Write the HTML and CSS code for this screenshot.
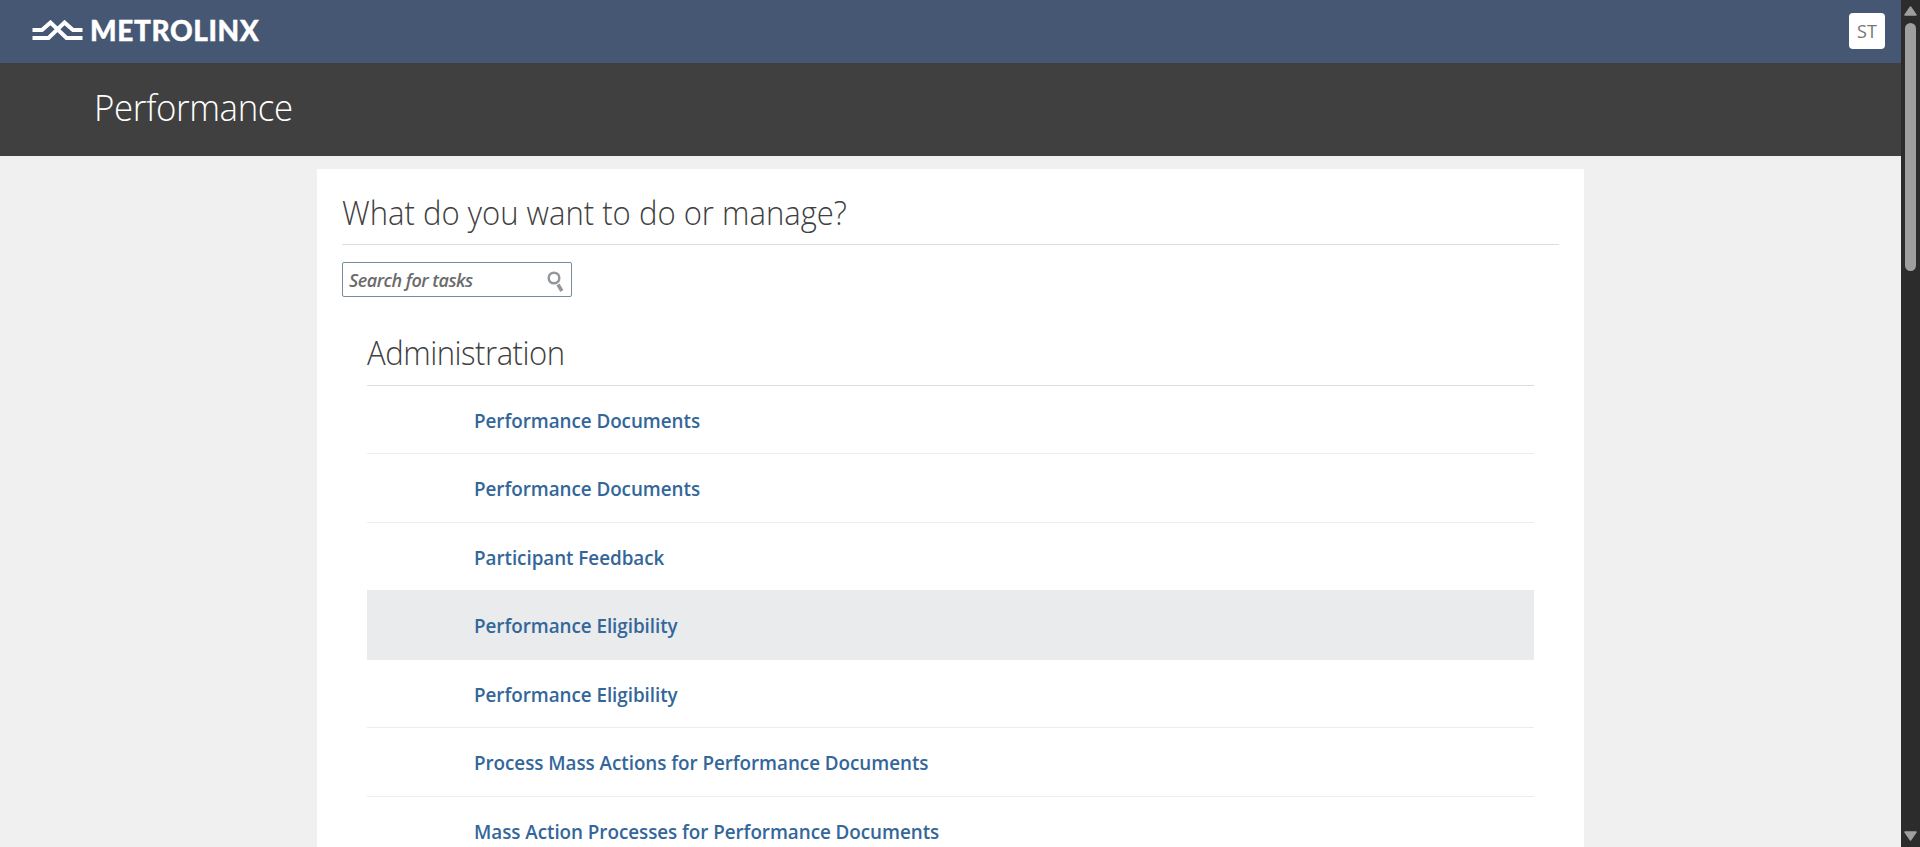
FILE: index.html
```html
<!DOCTYPE html>
<html lang="en">
<head>
<meta charset="utf-8">
<title>Performance</title>
<link rel="stylesheet" href="styles.css">
</head>
<body>
<div class="window">
  <div class="page">
    <header class="topbar">
      <div class="brand">
        <svg class="brand-mark" width="51" height="21" viewBox="0 0 51 21" fill="none" stroke="#fff" stroke-width="4">
          <path d="M0.5 10H10L18.500 2.500L34.500 18H50.500"/>
          <path d="M0.5 18H16.500L32.500 2.500L41 10H50.500"/>
        </svg>
        <span class="brand-name">METROLINX</span>
      </div>
      <div class="avatar">ST</div>
    </header>
    <div class="titlebar"><h1 class="page-title"><span class="narrow">Performance</span></h1></div>
    <main class="panel">
      <h2 class="question"><span class="narrow">What do you want to do or manage?</span></h2>
      <div class="search">
        <span class="search-hint">Search for tasks</span>
        <svg class="search-icon" width="17" height="21" viewBox="0 0 17 21" fill="none" stroke="#949799">
          <circle cx="7" cy="7" r="5.300" stroke-width="2.500"/>
          <path d="M11 13.500L14.800 20" stroke-width="3.500"/>
        </svg>
      </div>
      <section class="group">
        <h2 class="group-title"><span class="narrow">Administration</span></h2>
        <ul class="tasks">
          <li class="task"><a class="link narrow">Performance Documents</a></li>
          <li class="task"><a class="link narrow">Performance Documents</a></li>
          <li class="task"><a class="link narrow">Participant Feedback</a></li>
          <li class="task task-hover"><a class="link narrow">Performance Eligibility</a></li>
          <li class="task"><a class="link narrow">Performance Eligibility</a></li>
          <li class="task"><a class="link narrow">Process Mass Actions for Performance Documents</a></li>
          <li class="task"><a class="link narrow">Mass Action Processes for Performance Documents</a></li>
        </ul>
      </section>
    </main>
  </div>
  <div class="scrollbar">
    <svg class="arrow" width="13" height="10" viewBox="0 0 13 10"><path d="M6.500 1L12 9H1Z" fill="#9f9f9f" stroke="#9f9f9f" stroke-width="1.500" stroke-linejoin="round"/></svg>
    <div class="track"><div class="thumb"></div></div>
    <svg class="arrow" width="13" height="10" viewBox="0 0 13 10"><path d="M6.500 9L12 1H1Z" fill="#9f9f9f" stroke="#9f9f9f" stroke-width="1.500" stroke-linejoin="round"/></svg>
  </div>
</div>
</body>
</html>
```
FILE: styles.css
```css
* { box-sizing: border-box; }
body { margin: 0; overflow: hidden; background: #f0f0f0; font-family: "Open Sans", "Noto Sans", sans-serif; }
h1, h2, ul { margin: 0; padding: 0; }
.window { display: flex; height: 847px; overflow: hidden; }
.page { flex: 1; overflow: hidden; }
.narrow { display: inline-block; transform: scaleX(0.941); transform-origin: left center; }
.topbar { display: flex; justify-content: space-between; height: 63px; padding: 13px 16px 0 32px; background: #455773; }
.brand { display: flex; gap: 7px; padding-top: 7px; height: 36px; }
.brand-name { font-family: Lato, sans-serif; font-weight: 900; font-size: 28px; line-height: 21px; color: #fff; letter-spacing: 0.6px; -webkit-text-stroke: 0.4px #fff; }
.avatar { width: 36px; height: 36px; border-radius: 4px; background: #fff; color: #757575; font-size: 18px; font-weight: 500; line-height: 36px; text-align: center; }
.titlebar { height: 93px; padding-left: 94px; background: #404040; }
.page-title { font-weight: 300; font-size: 37px; line-height: 88px; color: #fff; letter-spacing: -0.4px; }
.panel { width: 1267px; height: 700px; margin: 13px 0 0 317px; padding: 0 25px; background: #fff; }
.question, .group-title { font-weight: 300; font-size: 33px; color: #404040; border-bottom: 1px solid #d6dfe6; white-space: nowrap; }
.question { height: 76px; line-height: 87px; }
.search { display: flex; justify-content: space-between; width: 230px; height: 35px; margin-top: 17px; padding: 0 7px 0 6px; border: 1px solid #758d9b; border-radius: 2px; }
.search-hint { font-size: 18px; font-style: italic; font-weight: 600; line-height: 35px; color: #6b6b6b; letter-spacing: -0.5px; }
.search-icon { margin-top: 8px; }
.group { margin: 20px 25px 0; }
.group-title { height: 69px; line-height: 71px; letter-spacing: -0.5px; }
.tasks { list-style: none; margin-top: -0.35px; }
.task { height: 68.55px; padding-left: 107px; border-bottom: 1px solid #ebecee; }
.task-hover { height: 69.55px; margin-top: -1px; padding-top: 1px; background: #eaebed; border-color: #eaebed; }
.link { font-size: 20px; font-weight: 600; line-height: 70px; color: #336699; letter-spacing: -0.04px; }
.scrollbar { display: flex; flex-direction: column; align-items: center; width: 19px; padding: 6px 0; background: #2c2c2c; }
.arrow { flex: none; }
.track { flex: 1; padding-top: 7px; }
.thumb { width: 11px; height: 248px; border-radius: 5.5px; background: #9f9f9f; }
```
